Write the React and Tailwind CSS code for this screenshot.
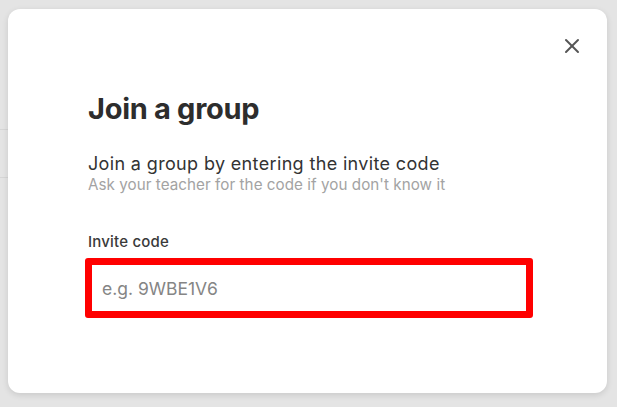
import React from 'react';
import { X } from 'lucide-react';

const App = () => {
  return (
    <div className="relative h-[407px] w-[617px] overflow-hidden bg-[#e4e4e4] pl-[8px] pt-[9px]" style={{ fontFamily: 'Inter, "Open Sans", sans-serif' }}>
      {/* faint page behind the dialog */}
      <div className="absolute left-0 top-[129px] h-px w-[8px] bg-[#d6d6d6]" />
      <div className="absolute left-0 top-[177px] h-px w-[8px] bg-[#d6d6d6]" />

      <div className="relative flex h-[384px] w-[599px] flex-col rounded-[12px] bg-white px-[80px] pt-[80px] shadow-[0_2px_6px_rgba(0,0,0,0.12)]">
        <button className="absolute right-[23px] top-[25px] text-[#555]">
          <X className="h-[24px] w-[24px]" strokeWidth={2} />
        </button>

        <h1 className="text-[29px] font-bold leading-[40px] tracking-[-0.3px] text-[#2d2d2d]">Join a group</h1>

        <div className="mt-[24px] flex flex-col">
          <p className="text-[18px] leading-[22px] tracking-[0.35px] text-[#333]">Join a group by entering the invite code</p>
          <p className="text-[15.2px] leading-[20px] tracking-[0.05px] text-[#a3a3a3]">Ask your teacher for the code if you don't know it</p>
        </div>

        <div className="mt-[37px] flex flex-col gap-[6px]">
          <label className="text-[15px] font-medium leading-[20px] tracking-[0.2px] text-[#3a3a3a]">Invite code</label>
          <div className="ml-[-3px] h-[60px] w-[448px] rounded-[3px] border-[7px] border-[#ff0000] bg-white">
            <input
              className="h-full w-full bg-transparent pl-[10px] text-[17.5px] text-[#333] outline-none placeholder:text-[#858585]"
              placeholder="e.g. 9WBE1V6"
            />
          </div>
        </div>
      </div>
    </div>
  );
};

export default App;
